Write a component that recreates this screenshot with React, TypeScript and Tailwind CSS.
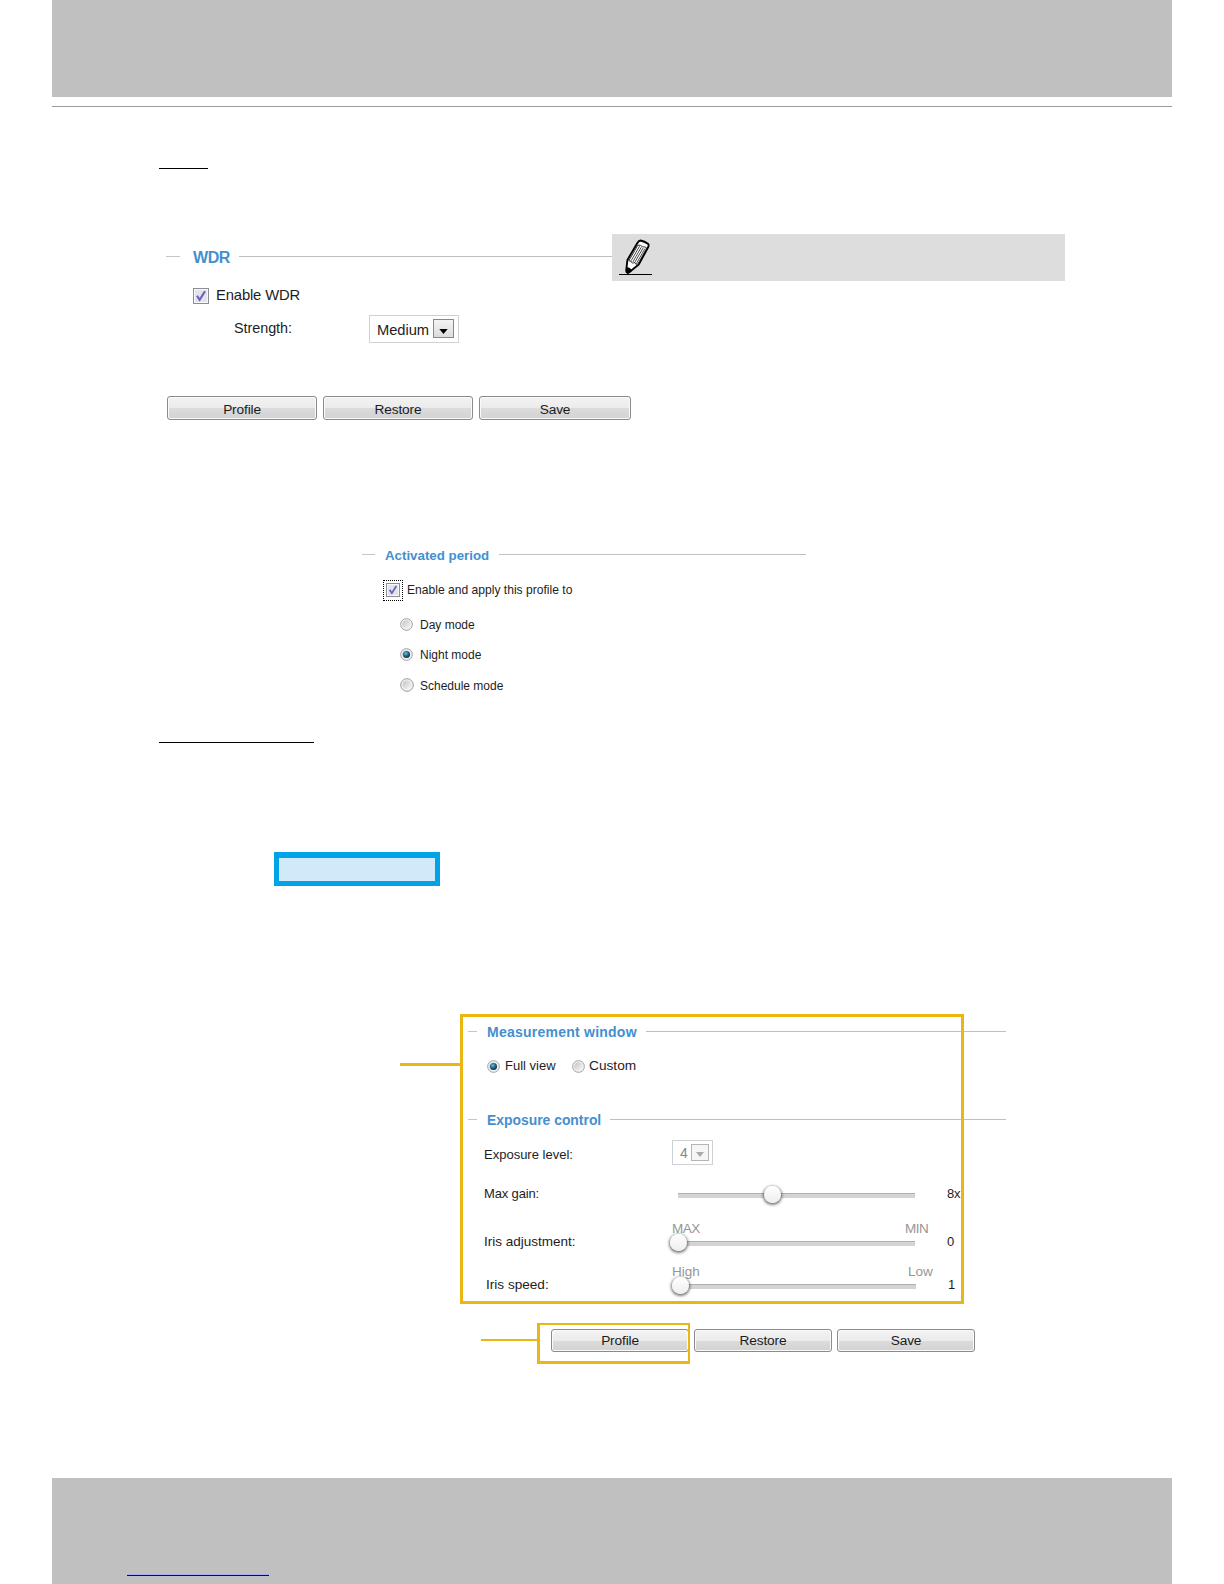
import React from "react";

function Check({ className }: { className: string }) {
  return (
    <span className={`shrink-0 border border-[#8d8d94] bg-[#e2e3ec] p-px shadow-[inset_0_0_0_1px_#f8f8fa] ${className}`}>
      <svg viewBox="0 0 12 12" className="block h-full w-full">
        <path d="M2 5.8 4.6 9.8 10 1.2" fill="none" stroke="#6464b4" strokeWidth="2.1" />
      </svg>
    </span>
  );
}

function Radio({ on = false, className = "h-[13px] w-[13px]" }: { on?: boolean; className?: string }) {
  return (
    <svg viewBox="0 0 14 14" className={`shrink-0 ${className}`}>
      <defs>
        <linearGradient id="radioFace" x1="0" y1="0" x2="1" y2="1">
          <stop offset="0" stopColor="#c2c2c2" />
          <stop offset="1" stopColor="#fafafa" />
        </linearGradient>
        <radialGradient id="radioDot" cx="0.4" cy="0.35" r="0.65">
          <stop offset="0" stopColor="#72c5e4" />
          <stop offset="0.5" stopColor="#246d91" />
          <stop offset="1" stopColor="#12334b" />
        </radialGradient>
      </defs>
      <circle cx="7" cy="7" r="6.3" fill="#f4f4f4" stroke="#999" />
      <circle cx="7" cy="7" r="4.6" fill="url(#radioFace)" />
      {on && <circle cx="7" cy="7" r="3.8" fill="url(#radioDot)" />}
    </svg>
  );
}

function Button({ label, className }: { label: string; className: string }) {
  return (
    <button
      className={`flex items-center justify-center rounded-[3px] border border-[#8b8b8b] bg-[linear-gradient(#f3f3f3_0%,#ebebeb_50%,#dcdcdc_51%,#d2d2d2_100%)] text-[13.7px] leading-none tracking-[-0.15px] text-[#1c1c1c] shadow-[inset_0_0_0_1px_#fafafa] ${className}`}
    >
      {label}
    </button>
  );
}

function Legend({ title, dash, text, line, className }: { title: string; dash: string; text: string; line: string; className: string }) {
  return (
    <div className={`flex h-5 items-center whitespace-nowrap ${className}`}>
      <span className={`h-px shrink-0 bg-[#c6c6c6] ${dash}`} />
      <span className={`relative shrink-0 font-bold leading-5 text-[#438fd0] ${text}`}>{title}</span>
      <span className={`h-px shrink-0 bg-[#c0c0c0] ${line}`} />
    </div>
  );
}

function Slider({ thumb, track, value, className, label, labelClass, valueClass }: {
  thumb: string; track: string; value: string; className: string; label: string; labelClass: string; valueClass: string;
}) {
  return (
    <div className={`flex h-5 items-center text-[13px] leading-5 ${className}`}>
      <span className={`shrink-0 whitespace-nowrap ${labelClass}`}>{label}</span>
      <div className={`relative mt-[3px] h-[5px] shrink-0 border-t border-[#b0b0b0] bg-[#d4d4d4] ${track}`}>
        <span className={`absolute -top-[8px] h-[17px] w-[17px] rounded-full bg-[linear-gradient(#ffffff,#eeeeee)] shadow-[0_1px_3px_1px_rgba(0,0,0,0.55)] ${thumb}`} />
      </div>
      <span className={valueClass}>{value}</span>
    </div>
  );
}

function Pencil() {
  return (
    <svg viewBox="0 0 34 38" className="ml-[7px] mt-[5px] h-[38px] w-[34px] shrink-0">
      <path d="M21.5 1.5 Q25.5 2.2 29.3 5 Q30 6 29.2 8 L19.8 25.5 L10.5 33 Q7.5 35 7.2 31.5 L8.4 21 L18.4 4 Q20 1.4 21.5 1.5Z" fill="#fff" stroke="#000" strokeWidth="1.9" />
      <path d="M9.8 21.8 L18.9 6.2 Q21.5 5.6 23.7 7.8 Q26 7.4 27.7 9 L18.8 25.2 Q16.5 26 15.6 23.5 Q12.5 25 12.2 22.3Z" fill="#fff" stroke="#000" strokeWidth=".8" />
      <path d="M20.6 7.2 12.2 21.6M22.3 8.2 13.9 22.8M24.1 9 15.6 23.6M25.9 9.6 17.4 24.6" fill="none" stroke="#000" strokeWidth=".7" />
      <path d="M7.4 28 7.2 33Q8 35.4 10.5 33.9L13.4 31.4 10.4 28.8Z" />
      <path d="M0 35.5H33" stroke="#000" />
    </svg>
  );
}

export default function App() {
  return (
    <div className="flex h-[1584px] w-[1224px] flex-col overflow-hidden bg-white font-['Liberation_Sans',Arial,sans-serif] text-[#1d1d24]">
      <header className="mx-[52px] h-[107px] shrink-0 border-b border-[#9b9b9b]">
        <div className="h-[97px] bg-[#c0c0c0]" />
      </header>

      <main className="flex h-[1371px] shrink-0 flex-col">
        <div className="ml-[159px] mt-[61px] h-px w-[49px] shrink-0 bg-black" />

        <section className="mt-[65px] h-[186px] shrink-0">
          <div className="flex h-[47px] items-start">
            <Legend title="WDR" className="ml-[166px] mt-[12px] w-[446px]" dash="w-[14px]" text="ml-[12px] w-[47px] pl-px text-[16px] tracking-[-0.4px] top-[2px]" line="w-[373px]" />
            <div className="flex h-[47px] w-[453px] bg-[#dddddd]">
              <Pencil />
            </div>
          </div>
          <div className="ml-[193px] mt-[4px] flex h-5 items-center">
            <Check className="mt-px h-[16px] w-[16px]" />
            <span className="ml-[7px] text-[14.8px] leading-5 tracking-[-0.15px]">Enable WDR</span>
          </div>
          <div className="ml-[234px] mt-[10px] flex h-[28px] items-center text-[14.4px] tracking-[-0.05px]">
            <span className="w-[135px]">Strength:</span>
            <div className="flex h-[28px] w-[90px] items-center border border-[#cfd2d4] pl-[7px]">
              <span className="mt-[2px] w-[56px] text-[14.7px]">Medium</span>
              <span className="-mt-px flex h-[19px] w-[21px] items-center justify-center border border-[#888] bg-[linear-gradient(#f4f4f4,#dcdcdc)]">
                <svg viewBox="0 0 10 6" className="mt-[5px] h-[5px] w-[9px]"><path d="M0 0h10L5 6Z" /></svg>
              </span>
            </div>
          </div>
          <div className="ml-[167px] mt-[53px] flex">
            <Button label="Profile" className="h-[24px] w-[150px] pt-[4px]" />
            <Button label="Restore" className="ml-[6px] h-[24px] w-[150px] pt-[4px]" />
            <Button label="Save" className="ml-[6px] h-[24px] w-[152px] pt-[4px]" />
          </div>
        </section>

        <section className="ml-[362px] mt-[124px] flex h-[198px] shrink-0 flex-col text-[12px]">
          <Legend title="Activated period" className="" dash="w-[13px]" text="ml-[10px] w-[114px] text-[13.3px] top-[2px]" line="w-[307px]" />
          <div className="ml-[21px] mt-[15px] flex h-[22px] items-center">
            <span className="flex h-[21px] w-[20px] items-center justify-center border border-dotted border-black">
              <Check className="h-[14px] w-[14px]" />
            </span>
            <span className="ml-[4px] mt-px text-[12.1px]">Enable and apply this profile to</span>
          </div>
          <label className="ml-[38px] mt-[13px] flex h-5 items-center"><Radio /><span className="ml-[7px] mt-[2px]">Day mode</span></label>
          <label className="ml-[38px] mt-[10px] flex h-5 items-center"><Radio on /><span className="ml-[7px] mt-[2px]">Night mode</span></label>
          <label className="ml-[38px] mt-[11px] flex h-5 items-center"><Radio className="h-[14px] w-[14px]" /><span className="ml-[6px] mt-px">Schedule mode</span></label>
        </section>

        <div className="ml-[159px] h-px w-[155px] shrink-0 bg-black" />
        <div className="ml-[274px] mt-[109px] h-[34px] w-[166px] shrink-0 border-[5px] border-t-[6px] border-[#00a2e8] bg-[#d2e9fa]" />

        <section className="relative ml-[400px] mt-[128px] h-[290px] w-[610px] shrink-0">
          <div className="ml-[60px] pt-[7px]">
            <Legend title="Measurement window" className="ml-[8px]" dash="w-[9px]" text="ml-[10px] w-[159px] text-[14px] tracking-[0.24px] top-px" line="w-[360px]" />
            <div className="ml-[27px] mt-[15px] flex h-5 items-center text-[13px]">
              <Radio on />
              <span className="ml-[5px] w-[67px]">Full view</span>
              <Radio />
              <span className="ml-[4px] text-[13.7px]">Custom</span>
            </div>
            <Legend title="Exposure control" className="ml-[8px] mt-[33px]" dash="w-[9px]" text="ml-[10px] w-[123px] text-[13.9px] top-[1px]" line="w-[396px]" />
            <div className="ml-[24px] mt-[11px] flex h-[25px] items-start text-[13px]">
              <span className="mt-[5px] w-[188px] leading-5">Exposure level:</span>
              <div className="flex h-[25px] w-[41px] items-center border border-[#cfd2d4] pl-[7px] text-[#858585]">
                <span className="mt-[2px] w-[11px] text-[14px]">4</span>
                <span className="flex h-[17px] w-[18px] items-center justify-center border border-[#b5b5b5] bg-[#f6f6f6]">
                  <svg viewBox="0 0 10 6" className="mt-[4px] h-[5px] w-[8px]" fill="#aaa"><path d="M0 0h10L5 6Z" /></svg>
                </span>
              </div>
            </div>
            <Slider label="Max gain:" labelClass="w-[194px] text-[13px] tracking-[-0.15px]" value="8x" valueClass="ml-[32px] tracking-[-0.3px]" className="ml-[24px] mt-[19px]" track="w-[237px]" thumb="left-[86px]" />
            <div className="ml-[212px] mt-[15px] flex h-5 items-center text-[13.5px] leading-5 tracking-[-0.5px] text-[#969696]">
              <span className="w-[233px]">MAX</span><span>MIN</span>
            </div>
            <Slider label="Iris adjustment:" labelClass="w-[194px] text-[13.5px]" value="0" valueClass="ml-[32px]" className="ml-[24px] -mt-[7px]" track="w-[237px]" thumb="-left-[8px]" />
            <div className="ml-[212px] mt-[10px] flex h-5 items-center text-[13.5px] leading-5 text-[#969696]">
              <span className="w-[236px]">High</span><span>Low</span>
            </div>
            <Slider label="Iris speed:" labelClass="w-[194px] text-[13.6px]" value="1" valueClass="ml-[32px]" className="ml-[26px] -mt-[7px]" track="w-[236px]" thumb="-left-[8px]" />
          </div>
          <div className="pointer-events-none absolute left-[60px] top-0 h-[290px] w-[504px] border-[3px] border-[#ebb514]" />
          <div className="absolute left-0 top-[49px] h-[3px] w-[60px] bg-[#ebb514]" />
        </section>

        <section className="relative ml-[481px] mt-[19px] h-[41px] w-[500px] shrink-0 pl-[70px] pt-[6px]">
          <div className="flex">
            <Button label="Profile" className="h-[23px] w-[138px] pt-px" />
            <Button label="Restore" className="ml-[5px] h-[23px] w-[138px] pt-px" />
            <Button label="Save" className="ml-[5px] h-[23px] w-[138px] pt-px" />
          </div>
          <div className="pointer-events-none absolute left-[56px] top-0 h-[41px] w-[153px] border-[3px] border-r-2 border-t-2 border-[#ebb514]" />
          <div className="absolute left-0 top-[16px] h-[2px] w-[56px] bg-[#ebb514]" />
        </section>
      </main>

      <footer className="mx-[52px] h-[106px] shrink-0 bg-[#c0c0c0] pl-[75px] pt-[96px]">
        <div className="h-[2px] w-[142px] border-b border-[#00009c] bg-[#aaaaff]" />
      </footer>
    </div>
  );
}
